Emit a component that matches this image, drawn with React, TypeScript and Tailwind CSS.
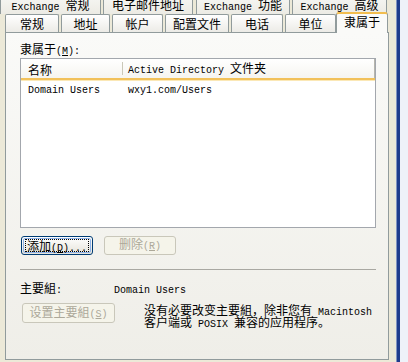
import React from "react";

// Split a string into Latin (half-width mono) and CJK runs, like SimSun renders them.
const T = ({ s }: { s: string }) => {
  const parts = s.split(/([\x20-\x7e]+)/).filter((p) => p.length > 0);
  return (
    <>
      {parts.map((p, i) =>
        /^[\x20-\x7e]+$/.test(p) ? (
          <span key={i} className="font-['Liberation_Mono'] text-[10px] whitespace-pre">
            {p}
          </span>
        ) : (
          <span key={i}>{p}</span>
        )
      )}
    </>
  );
};

const Ul = ({ c }: { c: string }) => (
  <span className="font-['Liberation_Mono'] text-[10px] underline underline-offset-1">{c}</span>
);

const TopTab = ({ label, w, ml }: { label: string; w: string; ml: string }) => (
  <div
    className={`${w} ${ml} h-[14px] text-center whitespace-nowrap leading-[10px] border-x border-[#919b9c] bg-linear-to-b from-[#f4f4f0] to-[#ecebe4]`}
  >
    <T s={label} />
  </div>
);

const Tab = ({ label, w }: { label: string; w: string }) => (
  <div
    className={`${w} h-[18px] text-center whitespace-nowrap pt-[3px] border border-b-0 border-[#919b9c] rounded-t-[2px] bg-linear-to-b from-white to-[#ecebe6]`}
  >
    <T s={label} />
  </div>
);

const App = () => {
  return (
    <div className="w-[408px] h-[362px] flex bg-[#ece9d8] overflow-hidden font-['Noto_Sans_CJK_SC',sans-serif] text-[12px] text-black leading-[12px]">
      <div className="w-[396px] flex flex-col">
        {/* back row of tabs */}
        <div className="flex">
          <TopTab label="Exchange 常规" w="w-[101px]" ml="ml-0" />
          <TopTab label="电子邮件地址" w="w-[90px]" ml="ml-[2px]" />
          <TopTab label="Exchange 功能" w="w-[94px]" ml="ml-[3px]" />
          <TopTab label="Exchange 高级" w="w-[95px]" ml="ml-[2px]" />
        </div>
        {/* front row of tabs */}
        <div className="relative z-10 -mt-px flex items-end gap-[2px] pl-[5px] h-[19px]">
          <Tab label="常规" w="w-[54px]" />
          <Tab label="地址" w="w-[49px]" />
          <Tab label="帐户" w="w-[51px]" />
          <Tab label="配置文件" w="w-[64px]" />
          <Tab label="电话" w="w-[52px]" />
          <Tab label="单位" w="w-[51px]" />
          <div className="-ml-[2px] -mb-px w-[52px] h-[21px] text-center whitespace-nowrap pt-[2px] border border-b-0 border-[#919b9c] border-t-2 border-t-[#f2bd4e] rounded-t-[3px] bg-[#fafaf8]">
            <T s="隶属于" />
          </div>
        </div>

        {/* page */}
        <div className="ml-[5px] w-[384px] h-[328px] border border-[#919b9c] bg-linear-to-b from-[#fafaf8] to-[#efeee8] pl-[14px] pr-[12px] pt-[10px] flex flex-col">
          <div className="h-[12px] whitespace-nowrap">
            <T s="隶属于(" />
            <Ul c="M" />
            <T s="):" />
          </div>

          {/* list view */}
          <div className="mt-[3px] h-[170px] border border-[#a3a7ad] bg-white flex flex-col">
            <div className="h-[19px] flex items-center bg-linear-to-b from-white to-[#f6f5f0]">
              <div className="w-[101px] pl-[7px] pt-[2px] whitespace-nowrap">
                <T s="名称" />
              </div>
              <div className="w-px h-[13px] bg-[#cac8b8]" />
              <div className="flex-1 pl-[5px] pt-[2px] whitespace-nowrap">
                <T s="Active Directory 文件夹" />
              </div>
              <div className="w-px h-[19px] bg-[#b6b5ad]" />
            </div>
            <div className="h-[2px] bg-[#f2c15a]" />
            <div className="h-px bg-[#fbe8b6]" />
            <div className="h-[14px] flex items-center pt-[2px]">
              <div className="w-[102px] pl-[7px] whitespace-nowrap">
                <T s="Domain Users" />
              </div>
              <div className="pl-[5px] whitespace-nowrap">
                <T s="wxy1.com/Users" />
              </div>
            </div>
          </div>

          {/* buttons */}
          <div className="mt-[8px] flex gap-[11px] pl-px">
            <button className="w-[72px] h-[19px] rounded-[3px] border border-[#003c74] bg-linear-to-b from-white to-[#e6e4da] p-px">
              <div className="w-full h-full rounded-[2px] border border-[#8fb2e8] flex items-center justify-center">
                <div className="px-px border border-dotted border-black h-[13px] leading-[11px] whitespace-nowrap">
                  <T s="添加(" />
                  <Ul c="D" />
                  <T s=")..." />
                </div>
              </div>
            </button>
            <button className="w-[72px] h-[19px] rounded-[3px] border border-[#c9c7ba] bg-[#f5f4ea] text-[#aca899] whitespace-nowrap">
              <T s="删除(" />
              <Ul c="R" />
              <T s=")" />
            </button>
          </div>

          <div className="mt-[14px] h-px bg-[#a9a8a2]" />

          <div className="mt-[12px] h-[12px] flex">
            <div className="w-[94px] whitespace-nowrap">
              <T s="主要組:" />
            </div>
            <div className="whitespace-nowrap">
              <T s="Domain Users" />
            </div>
          </div>

          <div className="mt-[9px] flex items-start">
            <button className="ml-[2px] w-[93px] h-[20px] rounded-[3px] border border-[#c9c7ba] bg-[#f5f4ea] text-[#aca899] whitespace-nowrap">
              <T s="设置主要組(" />
              <Ul c="S" />
              <T s=")" />
            </button>
            <div className="ml-[29px] mt-[1px] flex flex-col">
              <div className="h-[12px] whitespace-nowrap">
                <T s="没有必要改变主要組，除非您有 Macintosh" />
              </div>
              <div className="h-[12px] whitespace-nowrap">
                <T s="客户端或 POSIX 兼容的应用程序。" />
              </div>
            </div>
          </div>
        </div>
      </div>
      {/* edge of the window behind */}
      <div className="w-px bg-[#8093c0]" />
      <div className="w-[3px] bg-[#1f3c8c]" />
      <div className="flex-1 bg-[#eef2f9]" />
    </div>
  );
};

export default App;
